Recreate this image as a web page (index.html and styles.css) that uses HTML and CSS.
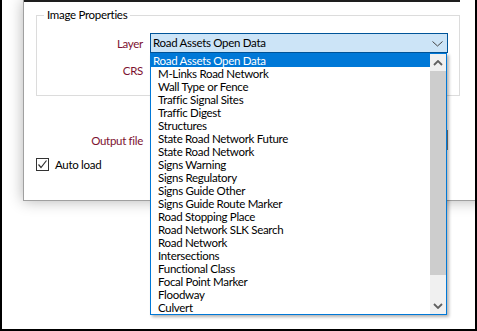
FILE: index.html
```html
<!DOCTYPE html>
<html lang="en">
<head>
  <meta charset="UTF-8" />
  <title>Image Properties</title>
  <link rel="stylesheet" href="styles.css">
</head>
<body>
  <div class="screen">
    <div class="dialog">
      <div class="title-line"></div>

      <fieldset class="group">
        <legend>Image Properties</legend>
        <div class="form-row">
          <label class="field-label">Layer</label>
          <div class="combo">
            <span>Road Assets Open Data</span>
            <svg class="combo-arrow" width="11" height="6" viewBox="0 0 11 6">
              <path d="M0.5 0.5 L5.5 5 L10.5 0.5" fill="none" stroke="#444" stroke-width="1" />
            </svg>
          </div>
        </div>
        <div class="form-row crs-row">
          <label class="field-label">CRS</label>
          <div class="blank-field"></div>
        </div>
      </fieldset>

      <div class="form-row output-row">
        <label class="field-label">Output file</label>
        <div class="textbox"></div>
      </div>

      <label class="check-row">
        <span class="checkbox">
          <svg width="11" height="11" viewBox="0 0 11 11">
            <path d="M1.5 5.5 L4 8.5 L9.5 1.5" fill="none" stroke="#333" stroke-width="1.2" />
          </svg>
        </span>
        Auto load
      </label>
    </div>

    <!-- open dropdown of the Layer combo -->
    <div class="dropdown">
      <ul class="options">
        <li class="selected">Road Assets Open Data</li>
        <li>M-Links Road Network</li>
        <li>Wall Type or Fence</li>
        <li>Traffic Signal Sites</li>
        <li>Traffic Digest</li>
        <li>Structures</li>
        <li>State Road Network Future</li>
        <li>State Road Network</li>
        <li>Signs Warning</li>
        <li>Signs Regulatory</li>
        <li>Signs Guide Other</li>
        <li>Signs Guide Route Marker</li>
        <li>Road Stopping Place</li>
        <li>Road Network SLK Search</li>
        <li>Road Network</li>
        <li>Intersections</li>
        <li>Functional Class</li>
        <li>Focal Point Marker</li>
        <li>Floodway</li>
        <li>Culvert</li>
      </ul>
      <div class="scrollbar">
        <div class="scroll-btn">
          <svg width="10" height="6" viewBox="0 0 10 6">
            <path d="M1 5 L5 1 L9 5" fill="none" stroke="#606060" stroke-width="1.8" />
          </svg>
        </div>
        <div class="thumb"></div>
        <div class="track"></div>
        <div class="scroll-btn">
          <svg width="10" height="6" viewBox="0 0 10 6">
            <path d="M1 1 L5 5 L9 1" fill="none" stroke="#606060" stroke-width="1.8" />
          </svg>
        </div>
      </div>
    </div>
  </div>
</body>
</html>
```

FILE: styles.css
```css
* {
  box-sizing: border-box;
}
body {
  margin: 0;
  background: #fff;
  font-family: 'Lato', 'Liberation Sans', sans-serif;
  font-size: 11.5px;
  letter-spacing: -0.3px;
  color: #000;
}
.screen {
  position: relative;
  width: 477px;
  height: 331px;
  border-left: 2px solid #000;
  border-right: 2px solid #000;
  border-bottom: 2px solid #000;
  overflow: hidden;
  background: #fff;
}
.dialog {
  margin-left: 21px;
  width: 470px;
  height: 201px;
  background: #fff;
  border-left: 1px solid #a0a0a0;
  border-bottom: 1px solid #a0a0a0;
  box-shadow: 0 0 14px rgba(0,0,0,0.3);
}
.title-line {
  width: 436px;
  height: 2px;
  background: #1e1e1e;
}
.group {
  margin: 6px 0 0 12px;
  width: 424px;
  height: 88px;
  padding: 0 7px;
  border: 1px solid #dcdcdc;
}
.group legend {
  padding: 0 3px;
  line-height: 14px;
}
.form-row {
  display: grid;
  grid-template-columns: 99px 298px;
  column-gap: 7px;
  align-items: center;
  height: 20px;
}
.group .form-row:first-of-type {
  margin-top: 11px;
}
.crs-row {
  margin-top: 7px;
}
.field-label {
  text-align: right;
  color: #7d1130;
}
.combo {
  position: relative;
  height: 20px;
  padding-left: 2px;
  line-height: 18px;
  background: #cce4f7;
  border: 1px solid #005499;
}
.combo-arrow {
  position: absolute;
  right: 4px;
  top: 7px;
}
.blank-field {
  height: 20px;
}
.output-row {
  margin: 34px 0 0 20px;
}
.textbox {
  height: 20px;
  border: 1px solid #7a7a7a;
  background: #fff;
}
.check-row {
  display: flex;
  align-items: center;
  gap: 6px;
  margin: 7px 0 0 12px;
  height: 14px;
}
.checkbox {
  display: flex;
  align-items: center;
  justify-content: center;
  width: 13px;
  height: 13px;
  border: 1px solid #333;
  background: #fff;
}
.dropdown {
  position: absolute;
  left: 148px;
  top: 53px;
  width: 297px;
  height: 262px;
  display: flex;
  background: #fff;
  border: 1px solid #0078d7;
  box-shadow: 2px 2px 3px rgba(0,0,0,0.3);
}
.options {
  list-style: none;
  margin: 0;
  padding: 0;
  width: 279px;
}
.options li {
  height: 13px;
  line-height: 13px;
  padding-left: 7px;
  white-space: nowrap;
}
.options li.selected {
  padding-left: 2px;
  background: #0078d7;
  color: #fff;
}
.scrollbar {
  width: 16px;
  display: flex;
  flex-direction: column;
  background: #f0f0f0;
}
.scroll-btn {
  height: 17px;
  display: flex;
  align-items: center;
  justify-content: center;
}
.thumb {
  height: 204px;
  background: #cdcdcd;
}
.track {
  flex: 1;
}
```
